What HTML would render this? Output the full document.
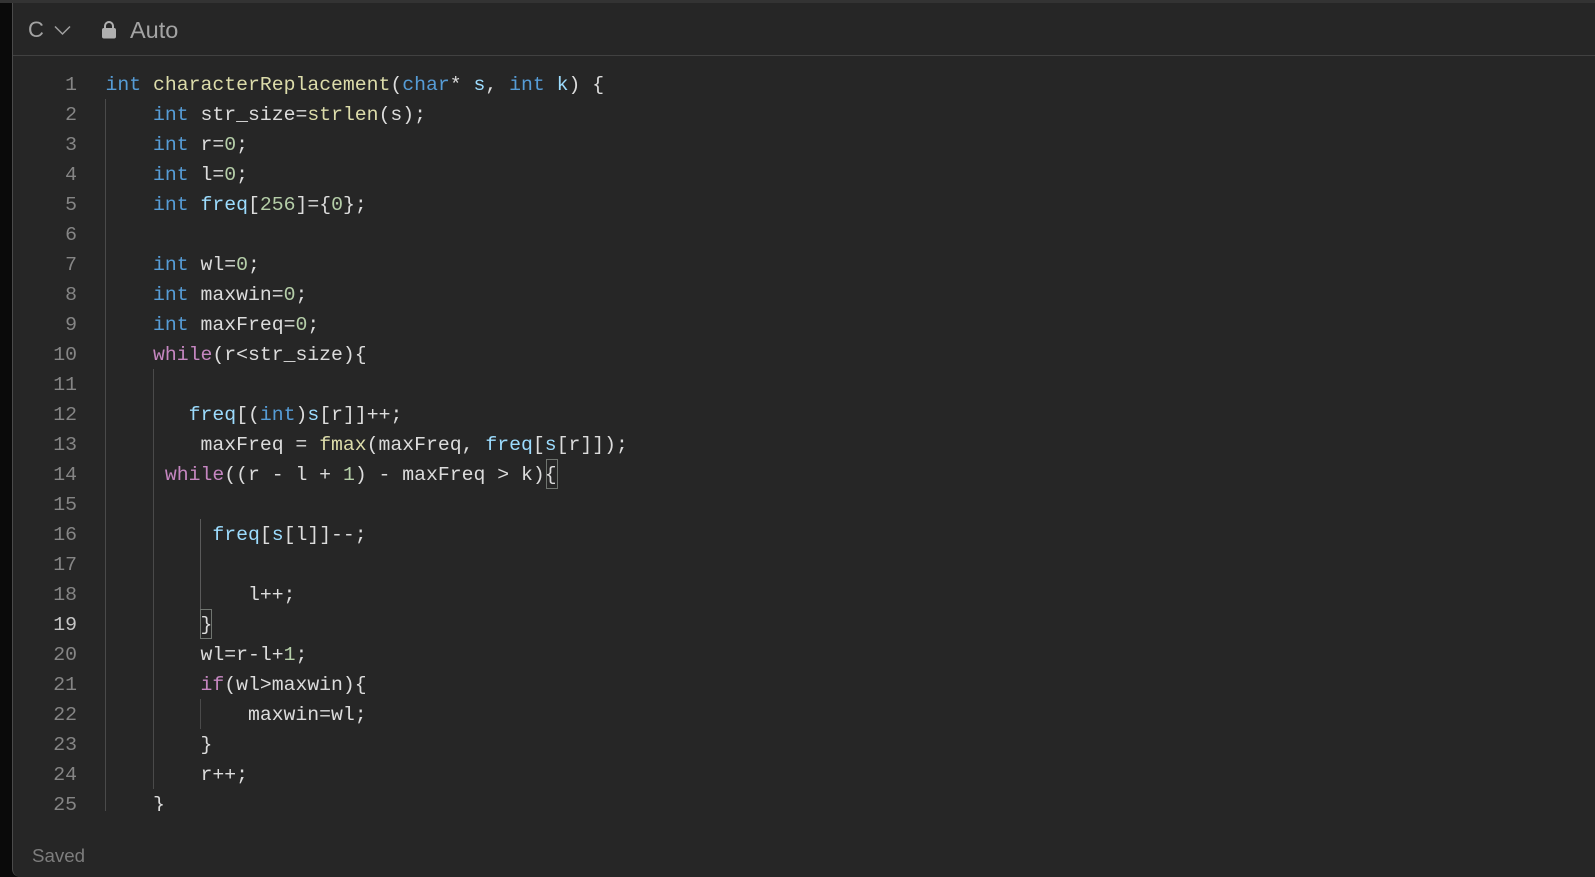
<!DOCTYPE html>
<html><head><meta charset="utf-8">
<style>
html,body{margin:0;padding:0;width:1595px;height:877px;overflow:hidden;background:#0a0a0a}
#p{position:absolute;left:12px;top:0;width:1583px;height:877px;background:#262626;border-left:1px solid #4a4a4a;border-bottom-left-radius:8px;box-sizing:border-box}
.abs{position:absolute}
.l,.n{position:absolute;height:30px;line-height:30px;font-family:"Liberation Mono",monospace;font-size:19.8px;white-space:pre;color:#dcdcdc;margin-top:1px}
.l{left:105.5px}
.n{left:30px;width:47px;text-align:right;color:#858585}
.k{color:#569cd6}.f{color:#dcdcaa}.v{color:#9cdcfe}.d{color:#b5cea8}.c{color:#c586c0}
.g{position:absolute;width:1px;background:#4a4a4a}
.b{position:absolute;border:1px solid #707570;box-sizing:border-box}
.u{position:absolute;font-family:"Liberation Sans",sans-serif;font-size:23.5px;line-height:30px;color:#a3a3a3}
</style></head><body>
<div id="p"></div>
<div class="abs" style="left:0;top:0;width:1595px;height:3px;background:#333"></div>
<div class="abs" style="left:13px;top:55px;width:1582px;height:1px;background:#414141"></div>

<div class="u" style="left:28px;top:15px;font-size:22px">C</div>
<svg class="abs" style="left:53px;top:24px" width="20" height="14" viewBox="0 0 20 14"><path d="M2 2.5 L9.5 10 L17 2.5" fill="none" stroke="#a0a0a0" stroke-width="1.5"/></svg>
<svg class="abs" style="left:100px;top:20px" width="18" height="20" viewBox="0 0 18 20"><path d="M5 9 V6 a4 4 0 0 1 8 0 V9" fill="none" stroke="#b0b0b0" stroke-width="2"/><rect x="2" y="8" width="14" height="10.5" rx="2" fill="#b0b0b0"/></svg>
<div class="u" style="left:130px;top:15px">Auto</div>

<div class="g" style="left:105px;top:99px;height:712px"></div>
<div class="g" style="left:153px;top:369px;height:420px"></div>
<div class="g" style="left:200px;top:519px;height:90px;background:#5a5a5a"></div>
<div class="g" style="left:200px;top:699px;height:30px"></div>
<div class="b" style="left:546px;top:459px;width:12px;height:30px"></div>
<div class="b" style="left:200px;top:609px;width:12px;height:30px"></div>

<div class="n" style="top:69px">1</div><div class="l" style="top:69px"><span class="k">int</span> <span class="f">characterReplacement</span>(<span class="k">char</span>* <span class="v">s</span>, <span class="k">int</span> <span class="v">k</span>) {</div>
<div class="n" style="top:99px">2</div><div class="l" style="top:99px">    <span class="k">int</span> str_size=<span class="f">strlen</span>(s);</div>
<div class="n" style="top:129px">3</div><div class="l" style="top:129px">    <span class="k">int</span> r=<span class="d">0</span>;</div>
<div class="n" style="top:159px">4</div><div class="l" style="top:159px">    <span class="k">int</span> l=<span class="d">0</span>;</div>
<div class="n" style="top:189px">5</div><div class="l" style="top:189px">    <span class="k">int</span> <span class="v">freq</span>[<span class="d">256</span>]={<span class="d">0</span>};</div>
<div class="n" style="top:219px">6</div>
<div class="n" style="top:249px">7</div><div class="l" style="top:249px">    <span class="k">int</span> wl=<span class="d">0</span>;</div>
<div class="n" style="top:279px">8</div><div class="l" style="top:279px">    <span class="k">int</span> maxwin=<span class="d">0</span>;</div>
<div class="n" style="top:309px">9</div><div class="l" style="top:309px">    <span class="k">int</span> maxFreq=<span class="d">0</span>;</div>
<div class="n" style="top:339px">10</div><div class="l" style="top:339px">    <span class="c">while</span>(r&lt;str_size){</div>
<div class="n" style="top:369px">11</div>
<div class="n" style="top:399px">12</div><div class="l" style="top:399px">       <span class="v">freq</span>[(<span class="k">int</span>)<span class="v">s</span>[r]]++;</div>
<div class="n" style="top:429px">13</div><div class="l" style="top:429px">        maxFreq = <span class="f">fmax</span>(maxFreq, <span class="v">freq</span>[<span class="v">s</span>[r]]);</div>
<div class="n" style="top:459px">14</div><div class="l" style="top:459px">     <span class="c">while</span>((r - l + <span class="d">1</span>) - maxFreq &gt; k){</div>
<div class="n" style="top:489px">15</div>
<div class="n" style="top:519px">16</div><div class="l" style="top:519px">         <span class="v">freq</span>[<span class="v">s</span>[l]]--;</div>
<div class="n" style="top:549px">17</div>
<div class="n" style="top:579px">18</div><div class="l" style="top:579px">            l++;</div>
<div class="n" style="top:609px;color:#c6c6c6">19</div><div class="l" style="top:609px">        }</div>
<div class="n" style="top:639px">20</div><div class="l" style="top:639px">        wl=r-l+<span class="d">1</span>;</div>
<div class="n" style="top:669px">21</div><div class="l" style="top:669px">        <span class="c">if</span>(wl&gt;maxwin){</div>
<div class="n" style="top:699px">22</div><div class="l" style="top:699px">            maxwin=wl;</div>
<div class="n" style="top:729px">23</div><div class="l" style="top:729px">        }</div>
<div class="n" style="top:759px">24</div><div class="l" style="top:759px">        r++;</div>
<div class="n" style="top:789px">25</div><div class="l" style="top:789px;height:21px;overflow:hidden">    }</div>

<div class="u" style="left:32px;top:841px;font-size:18.7px;color:#7d7d7d">Saved</div>
</body></html>
